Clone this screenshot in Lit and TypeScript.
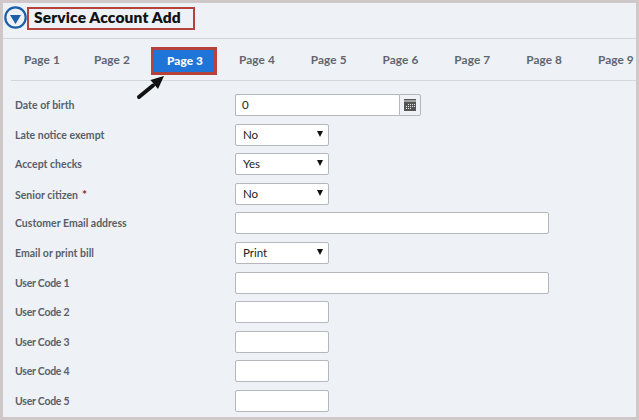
import { LitElement, html, css } from "lit";
import { customElement } from "lit/decorators.js";

type Row = { label: string; kind: "date" | "select" | "wide" | "small"; value?: string; req?: boolean };
const rows: Row[] = [
  { label: "Date of birth", kind: "date", value: "0" },
  { label: "Late notice exempt", kind: "select", value: "No" },
  { label: "Accept checks", kind: "select", value: "Yes" },
  { label: "Senior citizen", kind: "select", value: "No", req: true },
  { label: "Customer Email address", kind: "wide" },
  { label: "Email or print bill", kind: "select", value: "Print" },
  { label: "User Code 1", kind: "wide" },
  { label: "User Code 2", kind: "small" },
  { label: "User Code 3", kind: "small" },
  { label: "User Code 4", kind: "small" },
  { label: "User Code 5", kind: "small" },
];
const tabs = [1, 2, 3, 4, 5, 6, 7, 8, 9];

@customElement("app-root")
export class AppRoot extends LitElement {
  static styles = css`
    :host { display: block; width: 639px; height: 420px; box-sizing: border-box; overflow: hidden;
      border: 3px solid #d0c8c8; background: #eef1f5; font-family: Lato, sans-serif; position: relative; }
    .head { height: 36px; box-sizing: border-box; display: flex; align-items: flex-start;
      padding: 3px 0 0 1px; border-bottom: 1px solid #d3d6da; }
    .logo { width: 23px; height: 23px; flex: none; }
    .title { margin: 1px 0 0; width: 168px; height: 23px; box-sizing: border-box; border: 2.5px solid #b5433b;
      font: 800 15.5px/17px Lato, sans-serif; color: #111; padding-left: 5px; letter-spacing: .15px; white-space: nowrap; }
    .tabs { height: 42px; box-sizing: border-box; margin-left: 8px; border-bottom: 1px solid #d3d6da;
      display: flex; align-items: center; }
    .tab { font: 700 11.8px/14px Lato, sans-serif; color: #5f6670; white-space: nowrap; width: 71.8px; text-align: center; flex: none; letter-spacing: .1px; }
    .tab.first { width: 62px; }
    .tab.second { width: 78px; }
    .tab.active { width: 66px; height: 28px; box-sizing: border-box; border: 3px solid #b5433b; background: #1f74d8;
      color: #fff; line-height: 22px; margin: 2px 4px 0 0; padding-left: 2px; font-weight: 900; }
    .form { padding: 13px 0 0 12px; display: flex; flex-direction: column; }
    .row { height: 29.6px; display: flex; align-items: flex-start; flex: none; }
    .label { width: 220px; flex: none; font: 700 10.5px/23px Lato, sans-serif; color: #585f69; white-space: nowrap; }
    .label.tight { letter-spacing: -.25px; }
    .req { color: #8c2a22; margin-left: 4px; font-size: 12px; }
    .field { height: 22px; box-sizing: border-box; background: #fff; border: 1px solid #b4b7bb; border-radius: 2px;
      font: 11.5px/20px Lato, sans-serif; color: #222; }
    .small { width: 94px; }
    .wide { width: 314px; }
    .select { width: 94px; padding-left: 7px; display: flex; align-items: center; justify-content: space-between; padding-right: 4px; }
    .caret { width: 0; height: 0; border-left: 3.5px solid transparent; border-right: 3.5px solid transparent; border-top: 6px solid #111; margin-right: 1px; margin-top: -2px; }
    .date { display: flex; width: 186px; }
    .date .inp { width: 164px; padding-left: 6px; border-radius: 2px 0 0 2px; border-right: none; }
    .date .btn { width: 22px; border-radius: 0 2px 2px 0; background: #eef1f5; display: flex; align-items: center; justify-content: center; padding: 0; }
    .arrow { position: absolute; left: 133px; top: 70px; width: 32px; height: 28px; }
  `;

  private control(r: Row) {
    if (r.kind === "date")
      return html`<div class="date">
        <div class="field inp">${r.value}</div>
        <div class="field btn">
          <svg width="12" height="12" viewBox="0 0 12 12">
            <rect x="0" y="0" width="12" height="12" fill="#555"/>
            <rect x="0" y="1.5" width="12" height="1" fill="#eef1f5"/>
            <g fill="#e4e4e4">
              <rect x="4" y="5" width="1" height="1"/><rect x="6" y="5" width="1" height="1"/><rect x="8" y="5" width="1" height="1"/><rect x="10" y="5" width="1" height="1"/>
              <rect x="2" y="7" width="1" height="1"/><rect x="4" y="7" width="1" height="1"/><rect x="6" y="7" width="1" height="1"/><rect x="8" y="7" width="1" height="1"/><rect x="10" y="7" width="1" height="1"/>
              <rect x="2" y="9" width="1" height="1"/><rect x="4" y="9" width="1" height="1"/><rect x="6" y="9" width="1" height="1"/>
            </g>
          </svg>
        </div>
      </div>`;
    if (r.kind === "select")
      return html`<div class="field select"><span>${r.value}</span><span class="caret"></span></div>`;
    return html`<div class="field ${r.kind}"></div>`;
  }

  render() {
    return html`
      <div class="head">
        <svg class="logo" viewBox="0 0 23 23">
          <circle cx="11.5" cy="11.5" r="10.2" fill="none" stroke="#1c5ea8" stroke-width="2.2"/>
          <path d="M6 9h11L11.5 18z" fill="#1c5ea8"/>
        </svg>
        <h1 class="title">Service Account Add</h1>
      </div>
      <div class="tabs">
        ${tabs.map((t) => {
          const c = t === 1 ? "first" : t === 2 ? "second" : t === 3 ? "active" : "";
          return html`<div class="tab ${c}">Page ${t}</div>`;
        })}
      </div>
      <div class="form">
        ${rows.map((r) => html`<div class="row">
          <div class="label ${r.label.startsWith("User") ? "tight" : ""}">${r.label}${r.req ? html`<span class="req">*</span>` : ""}</div>
          ${this.control(r)}
        </div>`)}
      </div>
      <svg class="arrow" viewBox="0 0 32 28">
        <path d="M3 24L17 12.5" stroke="#111" stroke-width="4" stroke-linecap="round"/>
        <path d="M28 3L14.5 7L22 16z" fill="#111"/>
      </svg>
    `;
  }
}
